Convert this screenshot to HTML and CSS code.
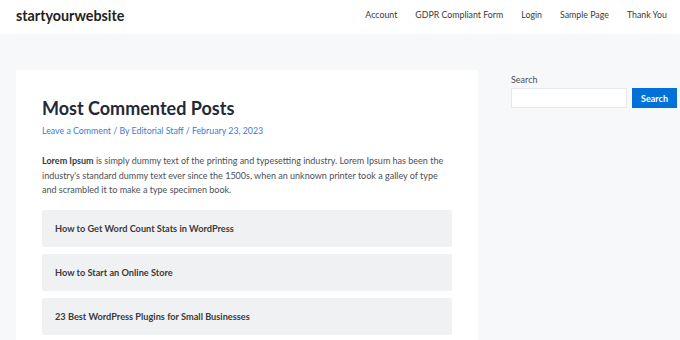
FILE: index.html
```html
<!DOCTYPE html>
<html lang="en">
<head>
<meta charset="UTF-8">
<meta name="viewport" content="width=device-width, initial-scale=1.0">
<title>Most Commented Posts</title>
<link rel="stylesheet" href="styles.css">
</head>
<body>

<!-- Site header -->
<header class="site-header">
  <div class="site-title">startyourwebsite</div>
  <nav class="main-nav">
    <a href="#">Account</a>
    <a href="#">GDPR Compliant Form</a>
    <a href="#">Login</a>
    <a href="#">Sample Page</a>
    <a href="#">Thank You</a>
  </nav>
</header>

<div class="site-content">
  <!-- Main article -->
  <main class="article-card">
    <h1 class="entry-title">Most Commented Posts</h1>
    <div class="entry-meta">
      <a href="#">Leave a Comment</a> / By <a href="#">Editorial Staff</a> / <a href="#">February 23, 2023</a>
    </div>
    <p class="entry-text">
      <strong>Lorem Ipsum</strong> is simply dummy text of the printing and typesetting industry. Lorem Ipsum has been the industry's standard dummy text ever since the 1500s, when an unknown printer took a galley of type and scrambled it to make a type specimen book.
    </p>
    <div class="post-list">
      <div class="post-item">How to Get Word Count Stats in WordPress</div>
      <div class="post-item">How to Start an Online Store</div>
      <div class="post-item">23 Best WordPress Plugins for Small Businesses</div>
    </div>
  </main>

  <!-- Sidebar -->
  <aside class="sidebar">
    <label class="search-label" for="s">Search</label>
    <div class="search-form">
      <input type="text" id="s" class="search-input">
      <button class="search-button">Search</button>
    </div>
  </aside>
</div>

</body>
</html>
```

FILE: styles.css
```css
body {
  font-family: Lato, Arial, sans-serif;
  margin: 0;
  padding: 0;
  background-color: #f7f8fa;
  color: #4b4f58;
}

a {
  text-decoration: none;
}

/* Header */
.site-header {
  display: flex;
  justify-content: space-between;
  align-items: center;
  height: 34px;
  padding: 0 13px 0 16px;
  background-color: #fff;
}

.site-title {
  font-size: 14.3px;
  font-weight: 700;
  color: #222;
  margin-top: -4px;
}

.main-nav {
  display: flex;
  gap: 18px;
  margin-top: -6px;
}

.main-nav a {
  font-size: 8.8px;
  color: #3a3a3a;
}

/* Layout */
.site-content {
  display: flex;
  gap: 33px;
  padding: 36px 4px 0 16px;
}

.article-card {
  flex-shrink: 0;
  width: 410px;
  padding: 26px 26px 10px;
  background-color: #fff;
}

.entry-title {
  margin: 0;
  font-size: 18px;
  font-weight: 700;
  line-height: 25px;
  color: #1f2937;
}

.entry-meta {
  margin-top: 4px;
  font-size: 8.8px;
  line-height: 12px;
}

.entry-meta a,
.entry-meta {
  color: #3a7bd5;
}

.entry-text {
  margin: 17px 0 0;
  font-size: 9px;
  line-height: 14.5px;
}

.entry-text strong {
  color: #3a3a3a;
}

.post-list {
  display: flex;
  flex-direction: column;
  gap: 7px;
  margin-top: 12px;
}

.post-item {
  height: 37px;
  display: flex;
  align-items: center;
  padding: 0 13px;
  background-color: #f0f1f3;
  border-radius: 2px;
  font-size: 9.2px;
  font-weight: 700;
  color: #3a3a3a;
}

/* Sidebar */
.sidebar {
  flex: 1;
  padding-top: 4px;
}

.search-label {
  display: block;
  font-size: 9px;
  line-height: 12px;
  color: #4b4f58;
  margin-bottom: 2px;
}

.search-form {
  display: flex;
  gap: 5px;
}

.search-input {
  width: 116px;
  height: 20px;
  box-sizing: border-box;
  border: 1px solid #e6e8ec;
  background-color: #fff;
  padding: 0 6px;
}

.search-button {
  width: 45px;
  height: 20px;
  padding: 0;
  border: none;
  background-color: #0170d9;
  color: #fff;
  font-family: inherit;
  font-size: 9px;
  font-weight: 700;
  cursor: pointer;
}
```
